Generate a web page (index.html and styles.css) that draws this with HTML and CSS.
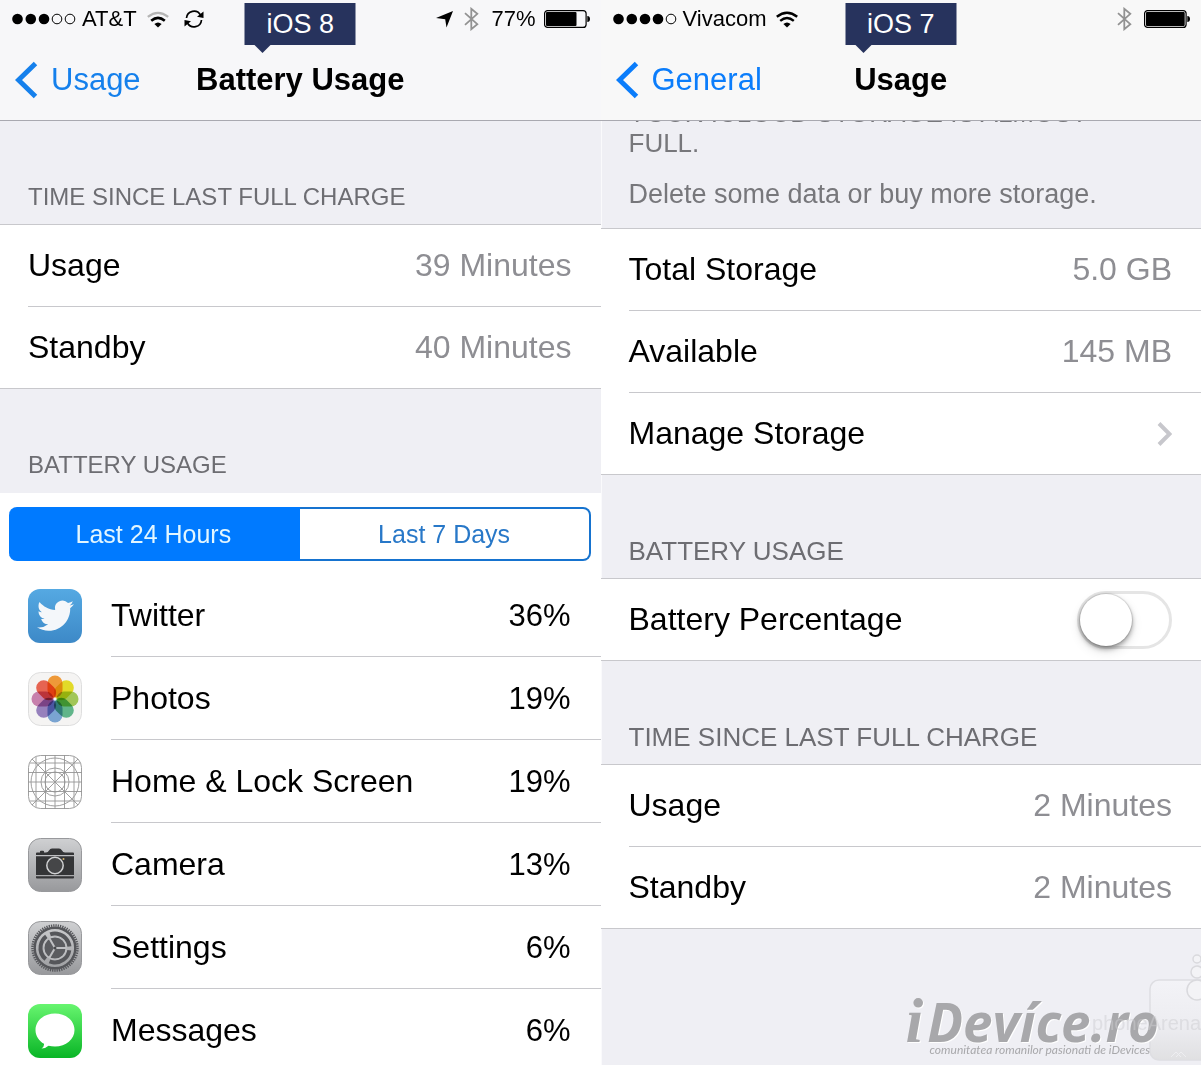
FILE: index.html
```
<!DOCTYPE html>
<html lang="en">
<head>
    <meta charset="UTF-8">
    <meta name="viewport" content="width=device-width, initial-scale=1.0">
    <title>Battery Usage: iOS 8 vs iOS 7</title>
    <link rel="stylesheet" href="styles.css">
</head>
<body>
    <main class="compare">
        <section class="phone">
            <div class="tag">iOS 8</div>
            <header class="top">
                <div class="status">
                    <div class="status-side">
                        <svg class="dots" width="64" height="12" viewBox="0 0 64 12">
                            <circle cx="5.5" cy="6" r="5.3"/><circle cx="18.8" cy="6" r="5.3"/><circle cx="32" cy="6" r="5.3"/>
                            <g fill="none" stroke="#000"><circle cx="45" cy="6" r="4.8"/><circle cx="58" cy="6" r="4.8"/></g>
                        </svg>
                        <span>AT&amp;T</span>
                        <svg class="wifi" width="22" height="17" viewBox="0 0 22 17">
                            <path d="M11 16.5 7.4 13Q11 9.8 14.6 13Z"/>
                            <path d="M4.2 9.8Q11 4 17.8 9.8" fill="none" stroke="#000" stroke-width="2.6"/>
                            <path d="M.8 5.8Q11-2.2 21.2 5.8" fill="none" stroke="#b5b5b5" stroke-width="2.2"/>
                        </svg>
                        <svg class="sync" width="20" height="18" viewBox="0 0 20 18">
                            <path d="M2.5 8A7.5 7.5 0 0 1 16.5 5M17.5 10A7.5 7.5 0 0 1 3.5 13" fill="none" stroke="#000" stroke-width="1.7"/>
                            <path d="M19.5 1.5V8L13 6.7ZM.5 16.5V10L7 11.3Z"/>
                        </svg>
                    </div>
                    <div class="status-side">
                        <svg width="17" height="17" viewBox="0 0 17 17"><path d="M17 0 10.5 16.5 9.2 8.2 0 7Z"/></svg>
                        <svg class="bluetooth" width="15" height="24" viewBox="0 0 15 24"><path d="M1 6.2 13.3 17.2 7.3 22.2V1.8L13.3 6.8 1 17.8"/></svg>
                        <span>77%</span>
                        <svg class="battery" width="46" height="18" viewBox="0 0 46 18">
                            <rect x=".6" y=".6" width="41.5" height="16.8" rx="3" fill="none" stroke="#000" stroke-width="1.2"/>
                            <rect x="2" y="2" width="30.5" height="14" rx="1"/><path d="M43.3 6Q46 6 46 9T43.3 12Z"/>
                        </svg>
                    </div>
                </div>
                <nav class="nav">
                    <a href="#usage" class="back">
                        <svg width="23" height="38" viewBox="0 0 23 38"><path d="M20.5 2.5 3.5 19 20.5 35.5"/></svg>
                        Usage
                    </a>
                    <h1>Battery Usage</h1>
                </nav>
            </header>

            <h2 class="label label-small">TIME SINCE LAST FULL CHARGE</h2>
            <ul class="rows">
                <li><span>Usage</span><span class="value">39 Minutes</span></li>
                <li><span>Standby</span><span class="value">40 Minutes</span></li>
            </ul>

            <h2 class="label label-small label-plain">BATTERY USAGE</h2>
            <div class="apps">
                <div class="segmented">
                    <button type="button" class="active">Last 24 Hours</button>
                    <button type="button">Last 7 Days</button>
                </div>
                <ul class="app-rows">
                    <li>
                        <svg class="icon" viewBox="0 0 54 54">
                            <defs><linearGradient id="tw" x2="0" y2="1"><stop stop-color="#55a9e2"/><stop offset="1" stop-color="#3d89c7"/></linearGradient></defs>
                            <rect width="54" height="54" rx="12" fill="url(#tw)"/>
                            <path transform="translate(9 8.2) scale(1.54)" fill="#f4f7fa" d="M23.95 4.57a10 10 0 0 1-2.82.77 4.96 4.96 0 0 0 2.16-2.72c-.95.55-2 .95-3.13 1.18a4.92 4.92 0 0 0-8.38 4.48C7.69 8.1 4.07 6.13 1.64 3.16a4.82 4.82 0 0 0-.67 2.48c0 1.71.87 3.21 2.19 4.1a4.9 4.9 0 0 1-2.23-.62v.06a4.92 4.92 0 0 0 3.95 4.83 5 5 0 0 1-2.21.08 4.94 4.94 0 0 0 4.6 3.42A9.87 9.87 0 0 1 0 19.54a14 14 0 0 0 7.55 2.21c9.05 0 14-7.5 14-13.98 0-.21 0-.42-.02-.63a9.94 9.94 0 0 0 2.46-2.55z"/>
                        </svg>
                        <span>Twitter</span><span class="percent">36%</span>
                    </li>
                    <li>
                        <svg class="icon" viewBox="0 0 54 54">
                            <rect x=".5" y=".5" width="53" height="53" rx="12" fill="#f5f4f3" stroke="#dedede"/>
                            <g class="petals">
                                <rect x="19.5" y="3.5" width="15" height="22" rx="7.5" fill="#f8a03c"/>
                                <rect x="19.5" y="3.5" width="15" height="22" rx="7.5" fill="#ece42a" transform="rotate(45 27 27)"/>
                                <rect x="19.5" y="3.5" width="15" height="22" rx="7.5" fill="#a9cf5c" transform="rotate(90 27 27)"/>
                                <rect x="19.5" y="3.5" width="15" height="22" rx="7.5" fill="#65bd91" transform="rotate(135 27 27)"/>
                                <rect x="19.5" y="3.5" width="15" height="22" rx="7.5" fill="#7facdc" transform="rotate(180 27 27)"/>
                                <rect x="19.5" y="3.5" width="15" height="22" rx="7.5" fill="#9c86c6" transform="rotate(225 27 27)"/>
                                <rect x="19.5" y="3.5" width="15" height="22" rx="7.5" fill="#cf86b5" transform="rotate(270 27 27)"/>
                                <rect x="19.5" y="3.5" width="15" height="22" rx="7.5" fill="#f06855" transform="rotate(315 27 27)"/>
                            </g>
                        </svg>
                        <span>Photos</span><span class="percent">19%</span>
                    </li>
                    <li>
                        <svg class="icon" viewBox="0 0 54 54" fill="none" stroke="#959595" stroke-width=".9">
                            <rect x=".5" y=".5" width="53" height="53" rx="12" fill="#fff"/>
                            <path d="M8 2V52M17.5 0V54M27 0V54M36.5 0V54M46 2V52M2 8H52M0 17.5H54M0 27H54M0 36.5H54M2 46H52M4 4 50 50M50 4 4 50"/>
                            <circle cx="27" cy="27" r="24"/><circle cx="27" cy="27" r="14"/><circle cx="27" cy="27" r="10"/>
                        </svg>
                        <span>Home &amp; Lock Screen</span><span class="percent">19%</span>
                    </li>
                    <li>
                        <svg class="icon" viewBox="0 0 54 54">
                            <defs><linearGradient id="gray" x2="0" y2="1"><stop stop-color="#cfd0d2"/><stop offset="1" stop-color="#98999c"/></linearGradient></defs>
                            <rect x=".5" y=".5" width="53" height="53" rx="12" fill="url(#gray)" stroke="#98999c"/>
                            <path fill="#343537" d="M8 17V15.5Q8 14.5 9 14.5H12V13.5Q12 12.8 13 12.8H15Q16 12.8 16 13.5V14.5H18Q20 14.5 21 12.5T24 10.5H31Q33 10.5 34 12.5T37 14.5H45Q46 14.5 46 15.5V17Z"/>
                            <path fill="#343537" d="M8 18.3H46V37H8ZM8 38.2H46V39.5Q46 40.5 45 40.5H9Q8 40.5 8 39.5Z"/>
                            <circle cx="27" cy="27.5" r="8.2" fill="#454648" stroke="#d0d1d3" stroke-width="1.5"/>
                            <circle cx="35.5" cy="21" r="1" fill="#d5b56d"/>
                        </svg>
                        <span>Camera</span><span class="percent">13%</span>
                    </li>
                    <li>
                        <svg class="icon" viewBox="0 0 54 54" fill="none" stroke="#55565a">
                            <rect x=".5" y=".5" width="53" height="53" rx="12" fill="url(#gray)" stroke="#98999c"/>
                            <circle cx="27" cy="27" r="22.5" stroke-width="2.5" stroke-dasharray="1.3 1"/>
                            <circle cx="27" cy="27" r="20.3" stroke-width="2.4"/>
                            <circle cx="27" cy="27" r="14.5" stroke-width="4" stroke-dasharray="26 4.37" transform="rotate(9 27 27)"/>
                            <circle cx="27" cy="27" r="11.2" fill="#5b5c60" stroke="#bfc0c3" stroke-width="1.3"/>
                            <path d="M27 27H38M27 27 21.5 17.5M27 27 21.5 36.5" stroke="#bfc0c3" stroke-width="2"/>
                            <circle cx="27" cy="27" r="1.5" fill="#48494c" stroke="none"/>
                        </svg>
                        <span>Settings</span><span class="percent">6%</span>
                    </li>
                    <li>
                        <svg class="icon" viewBox="0 0 54 54">
                            <defs><linearGradient id="msg" x2="0" y2="1"><stop stop-color="#67f56f"/><stop offset="1" stop-color="#09b526"/></linearGradient></defs>
                            <rect width="54" height="54" rx="12" fill="url(#msg)"/>
                            <path fill="#fff" d="M27 9.5C38 9.5 46.5 16.7 46.5 26S38 42.5 27 42.5Q23.5 42.5 20.5 41.7 17.5 44.5 13.5 44.5 16.5 42.5 16 39.8C11 37 7.5 32 7.5 26 7.5 16.7 16 9.5 27 9.5Z"/>
                        </svg>
                        <span>Messages</span><span class="percent">6%</span>
                    </li>
                </ul>
            </div>
        </section>

        <section class="phone phone-right">
            <div class="tag">iOS 7</div>
            <header class="top">
                <div class="status">
                    <div class="status-side">
                        <svg class="dots" width="64" height="12" viewBox="0 0 64 12">
                            <circle cx="5.5" cy="6" r="5.3"/><circle cx="18.8" cy="6" r="5.3"/><circle cx="32" cy="6" r="5.3"/><circle cx="45" cy="6" r="5.3"/>
                            <circle cx="58" cy="6" r="4.8" fill="none" stroke="#000"/>
                        </svg>
                        <span>Vivacom</span>
                        <svg class="wifi" width="22" height="17" viewBox="0 0 22 17">
                            <path d="M11 16.5 7.4 13Q11 9.8 14.6 13Z"/>
                            <path d="M4.2 9.8Q11 4 17.8 9.8M.8 5.8Q11-2.2 21.2 5.8" fill="none" stroke="#000" stroke-width="2.4"/>
                        </svg>
                    </div>
                    <div class="status-side">
                        <svg class="bluetooth" width="15" height="24" viewBox="0 0 15 24"><path d="M1 6.2 13.3 17.2 7.3 22.2V1.8L13.3 6.8 1 17.8"/></svg>
                        <svg class="battery" width="46" height="18" viewBox="0 0 46 18">
                            <rect x=".6" y=".6" width="41.5" height="16.8" rx="3" fill="none" stroke="#000" stroke-width="1.2"/>
                            <rect x="2" y="2" width="38.7" height="14" rx="1"/><path d="M43.3 6Q46 6 46 9T43.3 12Z"/>
                        </svg>
                    </div>
                </div>
                <nav class="nav">
                    <a href="#general" class="back">
                        <svg width="23" height="38" viewBox="0 0 23 38"><path d="M20.5 2.5 3.5 19 20.5 35.5"/></svg>
                        General
                    </a>
                    <h1>Usage</h1>
                </nav>
            </header>

            <div class="notice">
                <p>YOUR ICLOUD STORAGE IS ALMOST<br>FULL.</p>
                <p class="notice-hint">Delete some data or buy more storage.</p>
            </div>
            <ul class="rows">
                <li><span>Total Storage</span><span class="value">5.0 GB</span></li>
                <li><span>Available</span><span class="value">145 MB</span></li>
                <li>
                    <a href="#manage" class="row-link">
                        <span>Manage Storage</span>
                        <svg width="15" height="24" viewBox="0 0 15 24"><path d="M2 1.5 12.5 12 2 22.5"/></svg>
                    </a>
                </li>
            </ul>

            <h2 class="label">BATTERY USAGE</h2>
            <ul class="rows">
                <li>
                    <label for="percentage">Battery Percentage</label>
                    <input type="checkbox" id="percentage" class="switch">
                </li>
            </ul>

            <h2 class="label">TIME SINCE LAST FULL CHARGE</h2>
            <ul class="rows">
                <li><span>Usage</span><span class="value">2 Minutes</span></li>
                <li><span>Standby</span><span class="value">2 Minutes</span></li>
            </ul>

            <svg class="arena-mark" width="52" height="108" viewBox="0 0 52 108">
                <defs><linearGradient id="arena" x2="0" y2="1"><stop stop-color="#f3f3f7"/><stop offset=".6" stop-color="#ececf0"/><stop offset="1" stop-color="#e0e0e2"/></linearGradient></defs>
                <rect x="1" y="27" width="70" height="80" rx="9" fill="url(#arena)" stroke="#dedee2" stroke-width="1.5"/>
                <g fill="#f3f3f6" stroke="#d9d9dd" stroke-width="1.5"><circle cx="48" cy="6" r="4"/><circle cx="48" cy="19" r="6"/><circle cx="48" cy="37" r="10"/></g>
                <path d="M22 104 27 99 32 104M27 104 32 99 37 104" fill="none" stroke="#eeeef1"/>
            </svg>
            <div class="watermark">
                <div class="brand"><span class="brand-i">i</span>Devíce.ro</div>
                <div class="tagline">comunitatea romanilor pasionati de iDevices</div>
            </div>
            <div class="arena-name">phoneArena</div>
        </section>
    </main>
</body>
</html>
```
FILE: styles.css
```
* {
    box-sizing: border-box;
}

body {
    margin: 0;
    font-family: "Liberation Sans", Arial, sans-serif;
    color: #000;
    background-color: #efeff4;
}

h1, h2, p, ul {
    margin: 0;
    padding: 0;
    font-weight: normal;
}

ul {
    list-style: none;
}

svg {
    display: block;
    flex-shrink: 0;
}

.compare {
    display: grid;
    grid-template-columns: 1fr 1fr;
}

.phone {
    position: relative;
    height: 100vh;
    overflow: hidden;
    background-color: #efeff4;
}

.phone-right {
    box-shadow: inset 1px 0 #fafafc;
}

/* header */
.top {
    position: relative;
    z-index: 1;
    height: 121px;
    background-color: #f7f7f9;
    border-bottom: 1px solid #a9a9b0;
}

.phone-right .top {
    background-color: #f8f8f8;
}

.status {
    display: flex;
    justify-content: space-between;
    height: 38px;
    padding: 0 11px 0 12px;
    font-size: 22px;
}

.status-side {
    display: flex;
    align-items: center;
}

.dots {
    margin-right: 6px;
}

.wifi {
    margin-left: 10px;
}

.sync {
    margin-left: 15px;
}

.bluetooth {
    margin: 0 12px 0 11px;
    fill: none;
    stroke: #929292;
    stroke-width: 1.8;
}

.battery {
    margin-left: 8px;
}

.bluetooth + .battery {
    margin-left: 0;
}

.nav {
    display: grid;
    grid-template-columns: 1fr auto 1fr;
    align-items: center;
    height: 83px;
    padding: 0 15px;
    font-size: 31px;
}

.nav h1 {
    font-size: 31px;
    font-weight: bold;
}

.back {
    display: flex;
    align-items: center;
    gap: 13px;
    color: #1580ec;
    text-decoration: none;
}

.phone-right .back {
    color: #0b7dfb;
}

.back path {
    fill: none;
    stroke: currentColor;
    stroke-width: 5;
}

.tag {
    position: absolute;
    z-index: 2;
    top: 3px;
    left: 50%;
    width: 111px;
    height: 42px;
    transform: translateX(-50%);
    background-color: #27335d;
    color: white;
    font-size: 27px;
    line-height: 43px;
    text-align: center;
}

.tag::after {
    content: "";
    position: absolute;
    top: 100%;
    left: 10px;
    border: 8px solid transparent;
    border-top-color: #27335d;
    border-bottom: none;
}

/* grouped lists */
.label {
    height: 104px;
    padding: 61px 28px 0;
    border-bottom: 1px solid #c8c8cc;
    color: #6d6d72;
    font-size: 26px;
    line-height: 30px;
}

.label-small {
    font-size: 24px;
}

.label-plain {
    border-bottom-color: #efeff4;
}

/* scrolled under the header, so only the end of it shows */
.notice {
    display: flow-root;
    height: 108px;
    border-bottom: 1px solid #c8c8cc;
    padding: 0 28px;
    color: #77777b;
    font-size: 26px;
    line-height: 30px;
}

.notice p:first-child {
    margin: -23px 0 21px;
}

.notice-hint {
    font-size: 27px;
}

.rows {
    background-color: white;
    border-bottom: 1px solid #c8c8cc;
    padding-left: 28px;
    font-size: 32px;
}

.rows li {
    display: flex;
    align-items: center;
    justify-content: space-between;
    height: 82px;
    padding-right: 29px;
    border-bottom: 1px solid #c8c8cc;
}

.rows li:last-child {
    height: 81px;
    border-bottom: none;
}

.value {
    color: #8e8e93;
}

.row-link {
    display: flex;
    flex: 1;
    align-items: center;
    justify-content: space-between;
    color: inherit;
    text-decoration: none;
}

.row-link path {
    fill: none;
    stroke: #c7c7cc;
    stroke-width: 4;
}

.switch {
    appearance: none;
    width: 95px;
    height: 58px;
    margin: 0;
    border: 3px solid #e5e5e5;
    border-radius: 29px;
    background-color: white;
    cursor: pointer;
}

.switch::before {
    content: "";
    display: block;
    width: 52px;
    height: 52px;
    border-radius: 50%;
    background-color: white;
    box-shadow: 0 0 1px 1px rgba(0, 0, 0, 0.12), 0 3px 5px rgba(0, 0, 0, 0.35), 0 5px 12px rgba(0, 0, 0, 0.12);
}

.switch:checked {
    background-color: #4cd964;
}

.switch:checked::before {
    margin-left: auto;
}

/* app list */
.apps {
    background-color: white;
}

.segmented {
    display: flex;
    padding: 14px 10px 13px 9px;
}

.segmented button {
    flex: 1;
    height: 54px;
    padding: 0;
    border: 2px solid #1673cf;
    border-left: none;
    border-radius: 0 8px 8px 0;
    background-color: white;
    color: #2878c8;
    font-family: inherit;
    font-size: 25px;
    cursor: pointer;
}

.segmented .active {
    border-color: #007aff;
    border-radius: 8px 0 0 8px;
    background-color: #007aff;
    color: #e2f6ff;
}

.app-rows {
    font-size: 32px;
}

.app-rows li {
    position: relative;
    display: flex;
    align-items: center;
    height: 83px;
    padding: 0 30px 0 28px;
}

.app-rows li::after {
    content: "";
    position: absolute;
    right: 0;
    bottom: 0;
    left: 111px;
    border-bottom: 1px solid #c8c8cc;
}

.icon {
    width: 54px;
    height: 54px;
    margin-right: 29px;
}

.petals rect {
    mix-blend-mode: multiply;
}

.percent {
    margin-left: auto;
    font-size: 31px;
}

/* watermarks */
.watermark {
    position: absolute;
    right: 42px;
    bottom: 7px;
    color: #a8a8ab;
    font-style: italic;
    text-align: right;
}

.brand {
    font-family: "Open Sans", sans-serif;
    font-size: 53px;
    font-weight: bold;
    line-height: 40px;
    text-shadow: 1px 1px #fff;
}

.brand-i {
    margin-right: 4px;
    font-family: "Liberation Serif", serif;
    font-size: 64px;
}

.tagline {
    padding-right: 9px;
    font-family: Lato, sans-serif;
    font-size: 12px;
    line-height: 16px;
}

.arena-mark {
    position: absolute;
    right: 0;
    bottom: 4px;
}

.arena-name {
    position: absolute;
    right: 0;
    bottom: 30px;
    color: rgba(205, 205, 210, 0.5);
    font-size: 20px;
    line-height: 24px;
}
```
